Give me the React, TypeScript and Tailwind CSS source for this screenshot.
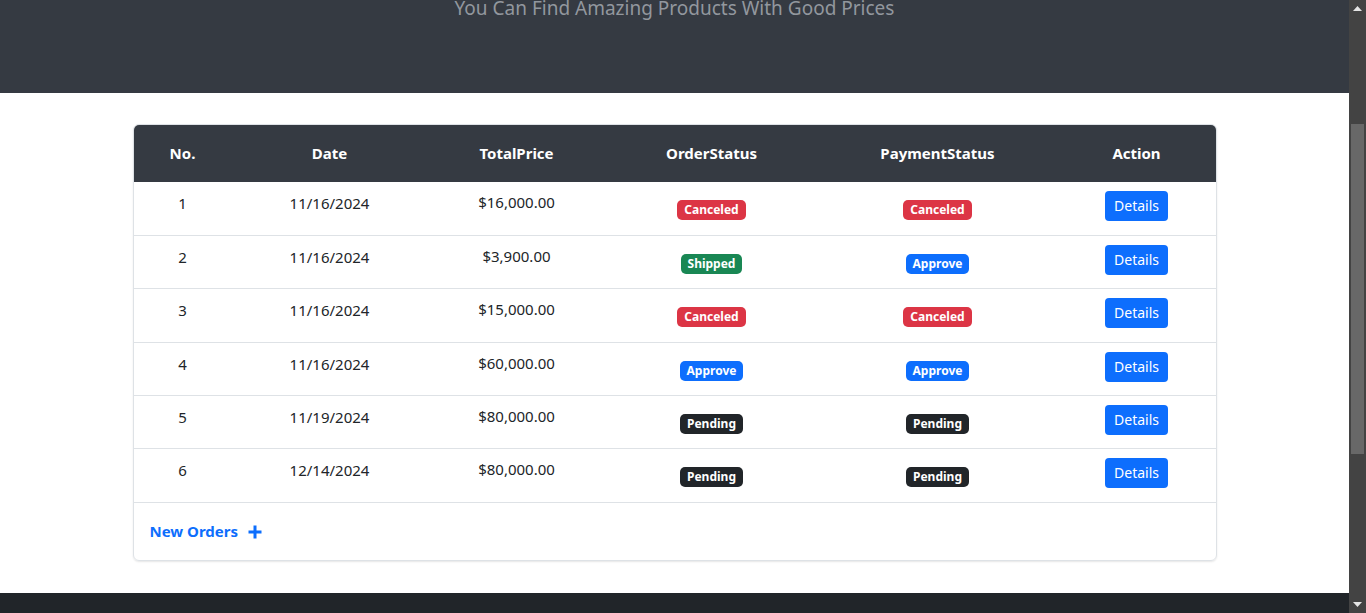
import React from 'react';

interface Order {
  no: number;
  date: string;
  total: string;
  orderStatus: string;
  paymentStatus: string;
  height: string;
}

const orders: Order[] = [
  { no: 1, date: '11/16/2024', total: '$16,000.00', orderStatus: 'Canceled', paymentStatus: 'Canceled', height: 'h-[54px]' },
  { no: 2, date: '11/16/2024', total: '$3,900.00', orderStatus: 'Shipped', paymentStatus: 'Approve', height: 'h-[53px]' },
  { no: 3, date: '11/16/2024', total: '$15,000.00', orderStatus: 'Canceled', paymentStatus: 'Canceled', height: 'h-[54px]' },
  { no: 4, date: '11/16/2024', total: '$60,000.00', orderStatus: 'Approve', paymentStatus: 'Approve', height: 'h-[53px]' },
  { no: 5, date: '11/19/2024', total: '$80,000.00', orderStatus: 'Pending', paymentStatus: 'Pending', height: 'h-[53px]' },
  { no: 6, date: '12/14/2024', total: '$80,000.00', orderStatus: 'Pending', paymentStatus: 'Pending', height: 'h-[54px]' },
];

const cols = 'grid grid-cols-[98px_196px_178px_212px_240px_158px]';

// badge colour per status
const badgeClass = (status: string) => {
  if (status === 'Canceled') return 'bg-[#dc3545]';
  if (status === 'Shipped') return 'bg-[#198754]';
  if (status === 'Approve') return 'bg-[#0d6efd]';
  return 'bg-[#212529]';
};

function Badge({ status }: { status: string }) {
  return (
    <span className={`inline-block h-5 rounded-[5px] px-[7px] text-[12px] font-bold leading-5 text-white ${badgeClass(status)}`}>
      {status}
    </span>
  );
}

function Scrollbar() {
  return (
    <div className="flex w-[17px] shrink-0 flex-col items-center bg-[#434343]">
      <div className="flex h-[17px] w-full items-center justify-center">
        <svg width="9" height="5" viewBox="0 0 9 5"><path d="M0 5L4.5 0L9 5Z" fill="#e5e5e5" /></svg>
      </div>
      <div className="flex-1 w-full px-[2px] pt-[107px] pb-[142px]">
        <div className="h-full w-full bg-[#686868]" />
      </div>
      <div className="flex h-[17px] w-full items-center justify-center">
        <svg width="9" height="5" viewBox="0 0 9 5"><path d="M0 0L4.5 5L9 0Z" fill="#e5e5e5" /></svg>
      </div>
    </div>
  );
}

export default function App() {
  return (
    <div className="flex h-screen overflow-hidden bg-white font-['Noto_Sans','Open_Sans',sans-serif] text-[#212529]">
      <div className="flex flex-1 flex-col">
        <header className="h-[93px] shrink-0 overflow-hidden bg-[#353a42]">
          <p className="mt-[-5px] text-center text-[19px] leading-[26px] text-[#92979e]">
            You Can Find Amazing Products With Good Prices
          </p>
        </header>

        <main className="flex-1 pt-[31px]">
          <div className="mx-auto w-[1084px] overflow-hidden rounded-[6px] border border-[#dee2e6] shadow-[0_1px_2px_rgba(0,0,0,0.1)]">
            <div className={`${cols} h-[57px] items-center bg-[#353a42] text-center text-[15px] font-bold text-white`}>
              <div>No.</div>
              <div>Date</div>
              <div>TotalPrice</div>
              <div>OrderStatus</div>
              <div>PaymentStatus</div>
              <div>Action</div>
            </div>

            {orders.map((order) => (
              <div key={order.no} className={`${cols} ${order.height} border-b border-[#dee2e6] text-center text-[15px]`}>
                <div className="pt-[9px] leading-6">{order.no}</div>
                <div className="pt-[9px] leading-6">{order.date}</div>
                <div className="pt-[8px] leading-6">{order.total}</div>
                <div className="pt-[15px]"><Badge status={order.orderStatus} /></div>
                <div className="pt-[15px]"><Badge status={order.paymentStatus} /></div>
                <div className="pt-[9px]">
                  <button className="h-[30px] rounded-[4px] bg-[#0d6efd] px-[9px] text-[14px] leading-[30px] text-white">
                    Details
                  </button>
                </div>
              </div>
            ))}

            <div className="flex h-[57px] items-center pl-4">
              <a href="#" className="flex items-center gap-[10px] text-[15px] font-bold text-[#0d6efd]">
                New Orders
                <svg width="14" height="14" viewBox="0 0 14 14" fill="none" stroke="#0d6efd" strokeWidth="3">
                  <path d="M7 0.5V13.5M0.5 7H13.5" />
                </svg>
              </a>
            </div>
          </div>
        </main>

        <footer className="h-[20px] shrink-0 bg-[#212529]" />
      </div>
      <Scrollbar />
    </div>
  );
}
